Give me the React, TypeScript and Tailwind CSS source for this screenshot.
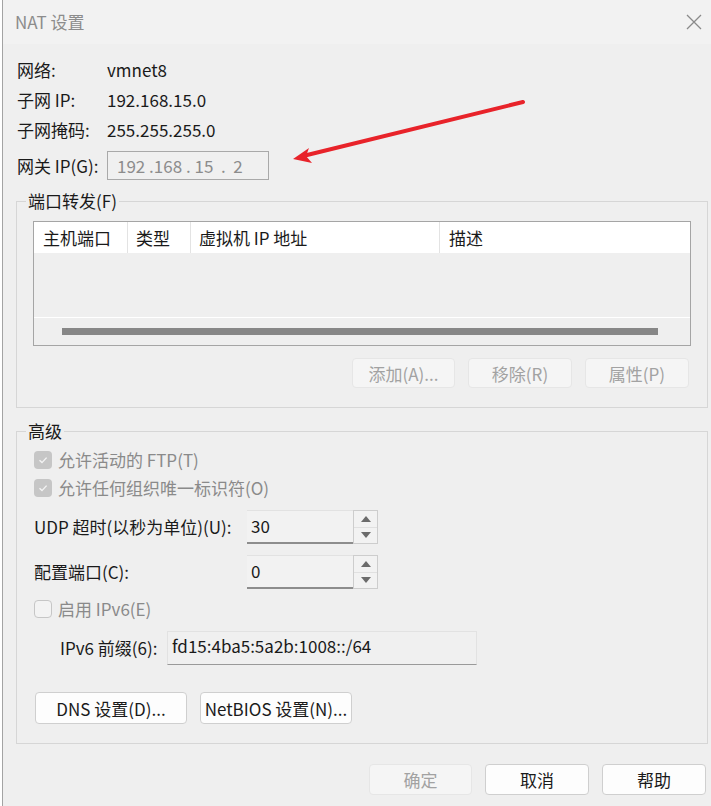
import React from 'react';

const FONT = "font-['Noto_Sans_CJK_SC','Noto_Sans',sans-serif]";

function Btn({ children, disabled, className = '' }: { children: React.ReactNode; disabled?: boolean; className?: string }) {
  return (
    <button
      className={`${className} flex items-center justify-center rounded-[4px] border text-[17px] leading-none ${
        disabled ? 'bg-[#f5f5f5] border-[#e6e6e6] text-[#a2a2a2]' : 'bg-[#fdfdfd] border-[#cfcfcf] text-[#1a1a1a]'
      }`}
    >
      {children}
    </button>
  );
}

function Check({ checked, label }: { checked?: boolean; label: React.ReactNode }) {
  return (
    <div className="flex items-center h-[28px] gap-[6px]">
      {checked ? (
        <div className="w-[18px] h-[18px] rounded-[4px] bg-[#c6c6c6] flex items-center justify-center">
          <svg width="12" height="12" viewBox="0 0 12 12">
            <path d="M2.5 6.2 L5 8.6 L9.6 3.6" fill="none" stroke="#f4f4f4" strokeWidth="1.4" />
          </svg>
        </div>
      ) : (
        <div className="w-[18px] h-[18px] rounded-[4px] border border-[#c6c6c6] bg-[#f3f3f3]" />
      )}
      <span className="text-[17px] text-[#8a8a8a]">{label}</span>
    </div>
  );
}

function Spin({ value }: { value: string }) {
  return (
    <div className="flex w-[131px] h-[34px]">
      <div className="flex-1 bg-[#f2f2f2] border-t border-[#e2e2e2] border-b-2 border-b-[#8d8d8d] pl-[4px] pt-[3px] text-[17px] text-[#1a1a1a] leading-[24px]">
        {value}
      </div>
      <div className="w-[25px] border border-[#cdcdcd] flex flex-col bg-[#f2f2f2]">
        <div className="flex-1 flex items-center justify-center border-b border-[#e0e0e0]">
          <svg width="10" height="6" viewBox="0 0 10 6"><path d="M0 6 L5 0 L10 6 Z" fill="#6b6b6b" /></svg>
        </div>
        <div className="flex-1 flex items-center justify-center">
          <svg width="10" height="6" viewBox="0 0 10 6"><path d="M0 0 L10 0 L5 6 Z" fill="#6b6b6b" /></svg>
        </div>
      </div>
    </div>
  );
}

export default function App() {
  return (
    <div className={`${FONT} w-[711px] h-[806px] bg-white pl-[2px] overflow-hidden`}>
      <div className="relative h-full border-l border-[#a3a3a3] bg-[#efefef] text-[#1a1a1a]">
        {/* title bar */}
        <div className="h-[44px] bg-[#f2f2f2] flex items-center justify-between pl-[12px] pr-[9px]">
          <span className="text-[17px] text-[#8c8c8c]">NAT 设置</span>
          <svg width="16" height="16" viewBox="0 0 16 16">
            <path d="M1 1 L15 15 M15 1 L1 15" stroke="#8a8a8a" strokeWidth="1.3" />
          </svg>
        </div>

        {/* info rows */}
        <div className="pl-[14px] pt-[11px] text-[17px]">
          <div className="flex items-center h-[30px]">
            <span className="w-[90px]">网络:</span>
            <span>vmnet8</span>
          </div>
          <div className="flex items-center h-[30px]">
            <span className="w-[90px]">子网 IP:</span>
            <span>192.168.15.0</span>
          </div>
          <div className="flex items-center h-[30px]">
            <span className="w-[90px]">子网掩码:</span>
            <span>255.255.255.0</span>
          </div>
          <div className="flex items-center h-[29px] mt-[6px]">
            <span className="w-[90px]">网关 IP(G):</span>
            <div className="w-[162px] h-[29px] border border-[#a9a9a9] bg-[#f0f0f0] flex items-center pl-[9px] text-[#8c8c8c] whitespace-pre">
              192 .168 . 15  .  2
            </div>
          </div>
        </div>

        {/* port forwarding */}
        <fieldset className="ml-[13px] mr-[3px] mt-[9px] border border-[#d6d6d6] px-[16px] pb-[19px]">
          <legend className="-ml-[7px] px-[2px] text-[17px] leading-[24px]">端口转发(F)</legend>
          <div className="mt-[8px] h-[125px] border border-[#a5a5a5] flex flex-col">
            <div className="h-[31px] bg-white flex text-[17px] items-center">
              <div className="w-[94px] h-full flex items-center pl-[9px] border-r border-[#e3e3e3]">主机端口</div>
              <div className="w-[63px] h-full flex items-center pl-[8px] border-r border-[#e3e3e3]">类型</div>
              <div className="w-[249px] h-full flex items-center pl-[8px] border-r border-[#e3e3e3]">虚拟机 IP 地址</div>
              <div className="flex-1 h-full flex items-center pl-[9px]">描述</div>
            </div>
            <div className="flex-1 border-b border-white" />
            <div className="h-[27px] flex items-center pl-[28px] pr-[32px]">
              <div className="h-[7px] w-full bg-[#878787]" />
            </div>
          </div>
          <div className="flex justify-end gap-[13px] mt-[12px] pr-[2px]">
            <Btn disabled className="w-[103px] h-[30px]">添加(A)...</Btn>
            <Btn disabled className="w-[104px] h-[30px]">移除(R)</Btn>
            <Btn disabled className="w-[104px] h-[30px]">属性(P)</Btn>
          </div>
        </fieldset>

        {/* advanced */}
        <fieldset className="ml-[13px] mr-[3px] mt-[11px] border border-[#d6d6d6] pl-[17px] pr-[16px] pb-[19px]">
          <legend className="-ml-[8px] px-[2px] text-[17px] leading-[24px]">高级</legend>
          <div className="mt-[3px]">
            <Check checked label="允许活动的 FTP(T)" />
            <Check checked label="允许任何组织唯一标识符(O)" />
          </div>
          <div className="flex items-center mt-[8px] text-[17px]">
            <span className="w-[213px]">UDP 超时(以秒为单位)(U):</span>
            <Spin value="30" />
          </div>
          <div className="flex items-center mt-[11px] text-[17px]">
            <span className="w-[213px]">配置端口(C):</span>
            <Spin value="0" />
          </div>
          <div className="mt-[6px]">
            <Check label="启用 IPv6(E)" />
          </div>
          <div className="flex items-center mt-[8px] pl-[26px] text-[17px]">
            <span className="w-[107px]">IPv6 前缀(6):</span>
            <div className="w-[310px] h-[34px] bg-[#f0f0f0] border border-[#e2e2e2] border-b-[#9a9a9a] pl-[4px] pt-[2px] leading-[24px]">
              fd15:4ba5:5a2b:1008::/64
            </div>
          </div>
          <div className="flex gap-[13px] mt-[27px] pl-[1px]">
            <Btn className="w-[152px] h-[32px]">DNS 设置(D)...</Btn>
            <Btn className="w-[152px] h-[32px]">NetBIOS 设置(N)...</Btn>
          </div>
        </fieldset>

        {/* footer buttons */}
        <div className="flex justify-end gap-[13px] mt-[20px] pr-[5px]">
          <Btn disabled className="w-[103px] h-[31px]">确定</Btn>
          <Btn className="w-[104px] h-[31px]">取消</Btn>
          <Btn className="w-[104px] h-[31px]">帮助</Btn>
        </div>

        {/* annotation arrow */}
        <svg className="absolute left-0 top-0 pointer-events-none" width="711" height="806">
          <line x1="520" y1="102" x2="300" y2="156" stroke="#e8232a" strokeWidth="4" strokeLinecap="round" />
          <polygon points="290,159 306,148 303,156 309,163" fill="#e8232a" />
        </svg>
      </div>
    </div>
  );
}
